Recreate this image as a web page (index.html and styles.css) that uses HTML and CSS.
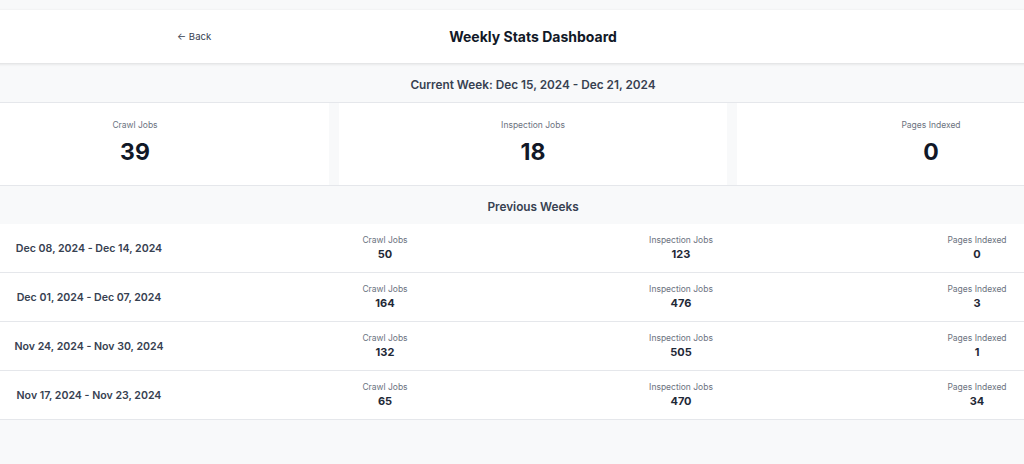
FILE: index.html
```html
<!DOCTYPE html>
<html lang="en">
<head>
  <meta charset="UTF-8" />
  <meta name="viewport" content="width=device-width, initial-scale=1.0"/>
  <title>Weekly Stats Dashboard</title>
  <link rel="stylesheet" href="styles.css">
</head>
<body>
  <div class="page">
    <header class="topbar">
      <a class="back" href="#">&larr; Back</a>
      <h1>Weekly Stats Dashboard</h1>
      <span></span>
    </header>

    <div class="band band-current">Current Week: Dec 15, 2024 - Dec 21, 2024</div>

    <div class="cards">
      <div class="card">
        <div class="card-label">Crawl Jobs</div>
        <div class="card-value">39</div>
      </div>
      <div class="card">
        <div class="card-label">Inspection Jobs</div>
        <div class="card-value">18</div>
      </div>
      <div class="card">
        <div class="card-label">Pages Indexed</div>
        <div class="card-value">0</div>
      </div>
    </div>

    <div class="band band-prev">Previous Weeks</div>

    <div class="weeks">
      <div class="week">
        <div class="week-date">Dec 08, 2024 - Dec 14, 2024</div>
        <div class="stat"><span>Crawl Jobs</span><b>50</b></div>
        <div class="stat"><span>Inspection Jobs</span><b>123</b></div>
        <div class="stat"><span>Pages Indexed</span><b>0</b></div>
      </div>
      <div class="week">
        <div class="week-date">Dec 01, 2024 - Dec 07, 2024</div>
        <div class="stat"><span>Crawl Jobs</span><b>164</b></div>
        <div class="stat"><span>Inspection Jobs</span><b>476</b></div>
        <div class="stat"><span>Pages Indexed</span><b>3</b></div>
      </div>
      <div class="week">
        <div class="week-date">Nov 24, 2024 - Nov 30, 2024</div>
        <div class="stat"><span>Crawl Jobs</span><b>132</b></div>
        <div class="stat"><span>Inspection Jobs</span><b>505</b></div>
        <div class="stat"><span>Pages Indexed</span><b>1</b></div>
      </div>
      <div class="week">
        <div class="week-date">Nov 17, 2024 - Nov 23, 2024</div>
        <div class="stat"><span>Crawl Jobs</span><b>65</b></div>
        <div class="stat"><span>Inspection Jobs</span><b>470</b></div>
        <div class="stat"><span>Pages Indexed</span><b>34</b></div>
      </div>
    </div>
  </div>
</body>
</html>
```

FILE: styles.css
```css
body {
  margin: 0;
  background: #f8f9fa;
  font-family: Inter, "Liberation Sans", Arial, sans-serif;
  color: #111827;
  overflow: hidden;
}
.page {
  width: 1184px;
  margin-left: -59px;
  padding-top: 10px;
}
.topbar {
  display: grid;
  grid-template-columns: 1fr auto 1fr;
  align-items: center;
  height: 53px;
  background: #fff;
  box-shadow: 0 1px 3px rgba(0,0,0,0.12);
  position: relative;
}
.back {
  padding-left: 236px;
  font-size: 9.6px;
  color: #374151;
  text-decoration: none;
}
.topbar h1 {
  margin: 0;
  font-size: 14px;
  font-weight: 700;
  color: #111827;
}
.band {
  text-align: center;
  font-size: 11.8px;
  font-weight: 600;
  color: #374151;
  border-bottom: 1px solid #e5e7eb;
}
.band-current {
  height: 39px;
  line-height: 44px;
}
.band-prev {
  height: 38px;
  line-height: 43px;
  border-bottom: none;
}
.cards {
  display: grid;
  grid-template-columns: repeat(3, 1fr);
  gap: 10px;
  border-bottom: 1px solid #e5e7eb;
}
.card {
  background: #fff;
  height: 82px;
  text-align: center;
}
.card-label {
  padding-top: 17px;
  font-size: 8.5px;
  color: #6b7280;
}
.card-value {
  margin-top: 8px;
  font-size: 23px;
  font-weight: 700;
  color: #111827;
}
.week {
  display: grid;
  grid-template-columns: repeat(4, 1fr);
  align-items: center;
  height: 48px;
  background: #fff;
  border-bottom: 1px solid #e5e7eb;
  text-align: center;
}
.week-date {
  padding-top: 1px;
  font-size: 10.6px;
  font-weight: 600;
  color: #374151;
}
.stat span {
  display: block;
  font-size: 8.5px;
  color: #6b7280;
}
.stat b {
  display: block;
  margin-top: 2px;
  font-size: 11px;
  font-weight: 700;
  color: #1f2937;
}
```
